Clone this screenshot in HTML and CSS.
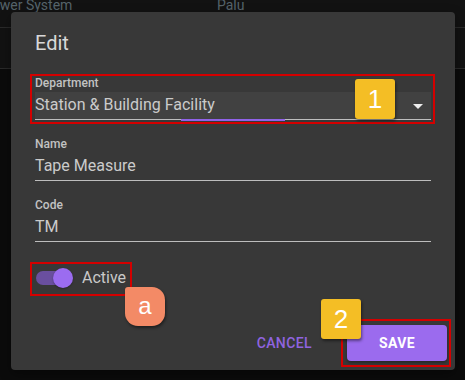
FILE: index.html
```html
<!DOCTYPE html>
<html lang="en">
<head>
    <meta charset="UTF-8">
    <meta name="viewport" content="width=device-width, initial-scale=1.0">
    <title>Edit Tool</title>
    <link rel="stylesheet" href="styles.css">
</head>
<body>

    <div class="table">
        <div class="row head">
            <span class="cell system">Power System</span>
            <span class="cell city">Palu</span>
        </div>
        <div class="row"></div>
    </div>

    <div class="dialog">
        <h2 class="title">Edit</h2>

        <div class="field first">
            <label class="label">Department</label>
            <div class="input filled">
                <span class="value">Station &amp; Building Facility</span>
                <span class="caret"></span>
                <span class="focus-line"></span>
            </div>
        </div>

        <div class="field">
            <label class="label">Name</label>
            <div class="input">
                <span class="value">Tape Measure</span>
            </div>
        </div>

        <div class="field">
            <label class="label">Code</label>
            <div class="input">
                <span class="value">TM</span>
            </div>
        </div>

        <div class="switch-row">
            <span class="switch">
                <span class="track"></span>
                <span class="thumb"></span>
            </span>
            <span class="switch-label">Active</span>
        </div>

        <div class="actions">
            <button class="btn text">Cancel</button>
            <button class="btn primary">Save</button>
        </div>

        <!-- tutorial markers -->
        <div class="mark box-dept"></div>
        <div class="badge badge-1">1</div>
        <div class="mark box-active"></div>
        <div class="badge badge-a">a</div>
        <div class="mark box-save"></div>
        <div class="badge badge-2">2</div>
    </div>

</body>
</html>
```

FILE: styles.css
```css
body {
    margin: 0;
    width: 465px;
    height: 380px;
    overflow: hidden;
    background-color: #0b0b0b;
    font-family: Roboto, "Liberation Sans", sans-serif;
    position: relative;
}
.table {
    background: #121212;
}
.row {
    height: 40px;
    border-bottom: 1px solid #2a2a2a;
}
.row.head {
    height: 27px;
    display: flex;
    font-size: 14px;
    line-height: 10px;
    color: #56646b;
}
.system {
    margin-left: -17px;
    width: 234px;
}
.dialog {
    position: absolute;
    left: 11px;
    top: 12px;
    width: 444px;
    height: 358px;
    box-sizing: border-box;
    padding: 15px 24px 0;
    background: #383838;
    border-radius: 4px;
    box-shadow: 0 4px 12px rgba(0, 0, 0, 0.4);
}
.title {
    margin: 0;
    font-size: 20px;
    font-weight: 400;
    line-height: 32px;
    color: #d8d8d8;
}
.field {
    margin-top: 17px;
}
.label {
    display: block;
    font-size: 12px;
    font-weight: 500;
    line-height: 14px;
    color: #c2c2c2;
}
.input {
    position: relative;
    display: flex;
    align-items: flex-start;
    margin-top: 2px;
    height: 27px;
    border-bottom: 1px solid #bdbdbd;
}
.input.filled {
    background: #414141;
}
.value {
    flex: 1;
    font-size: 16px;
    line-height: 25px;
    color: #cbcbcb;
}
.caret {
    align-self: center;
    margin: 2px 8px 0 0;
    border-left: 5px solid transparent;
    border-right: 5px solid transparent;
    border-top: 5px solid #eeeeee;
}
.focus-line {
    position: absolute;
    left: 146px;
    bottom: -2px;
    width: 104px;
    height: 2px;
    background: #9062e8;
}
.switch-row {
    display: flex;
    align-items: center;
    margin-top: 26px;
    padding-left: 1px;
}
.switch {
    position: relative;
    width: 38px;
    height: 20px;
    margin-right: 8px;
}
.track {
    position: absolute;
    left: 0;
    top: 3px;
    width: 34px;
    height: 14px;
    border-radius: 7px;
    background: #6a4f9f;
}
.thumb {
    position: absolute;
    left: 17px;
    top: 0;
    width: 20px;
    height: 20px;
    border-radius: 50%;
    background: #9b6cf0;
    box-shadow: 0 1px 2px rgba(0, 0, 0, 0.3);
}
.switch-label {
    font-size: 16px;
    line-height: 20px;
    color: #c9c9c9;
}
.actions {
    display: flex;
    justify-content: flex-end;
    align-items: center;
    gap: 19px;
    margin-top: 37px;
    margin-right: -16px;
}
.btn {
    height: 36px;
    border: none;
    background: none;
    font-family: Roboto, sans-serif;
    font-size: 14px;
    font-weight: 500;
    letter-spacing: 0.4px;
    text-transform: uppercase;
    cursor: pointer;
}
.btn.text {
    padding: 0 16px;
    color: #9064e0;
}
.btn.primary {
    width: 100px;
    border-radius: 4px;
    background: #9b6bee;
    color: #ffffff;
    font-weight: 700;
    box-shadow: 0 2px 3px rgba(0, 0, 0, 0.3);
}
.mark {
    position: absolute;
    box-sizing: border-box;
    border: 2px solid #d40000;
}
.box-dept {
    left: 19px;
    top: 62px;
    width: 405px;
    height: 50px;
}
.box-active {
    left: 19px;
    top: 250px;
    width: 102px;
    height: 34px;
}
.box-save {
    left: 330px;
    top: 307px;
    width: 110px;
    height: 48px;
}
.badge {
    position: absolute;
    width: 40px;
    height: 40px;
    border-radius: 3px;
    background: #f4be25;
    color: #ffffff;
    font-family: "Liberation Sans", Arial, sans-serif;
    font-size: 26px;
    line-height: 40px;
    text-align: center;
    box-shadow: 1px 2px 3px rgba(0, 0, 0, 0.45);
}
.badge-1 {
    left: 344px;
    top: 67px;
}
.badge-2 {
    left: 310px;
    top: 287px;
}
.badge-a {
    left: 114px;
    top: 275px;
    height: 39px;
    line-height: 37px;
    font-size: 24px;
    background: #f38a66;
    border-radius: 3px 13px 13px 13px;
}
```
